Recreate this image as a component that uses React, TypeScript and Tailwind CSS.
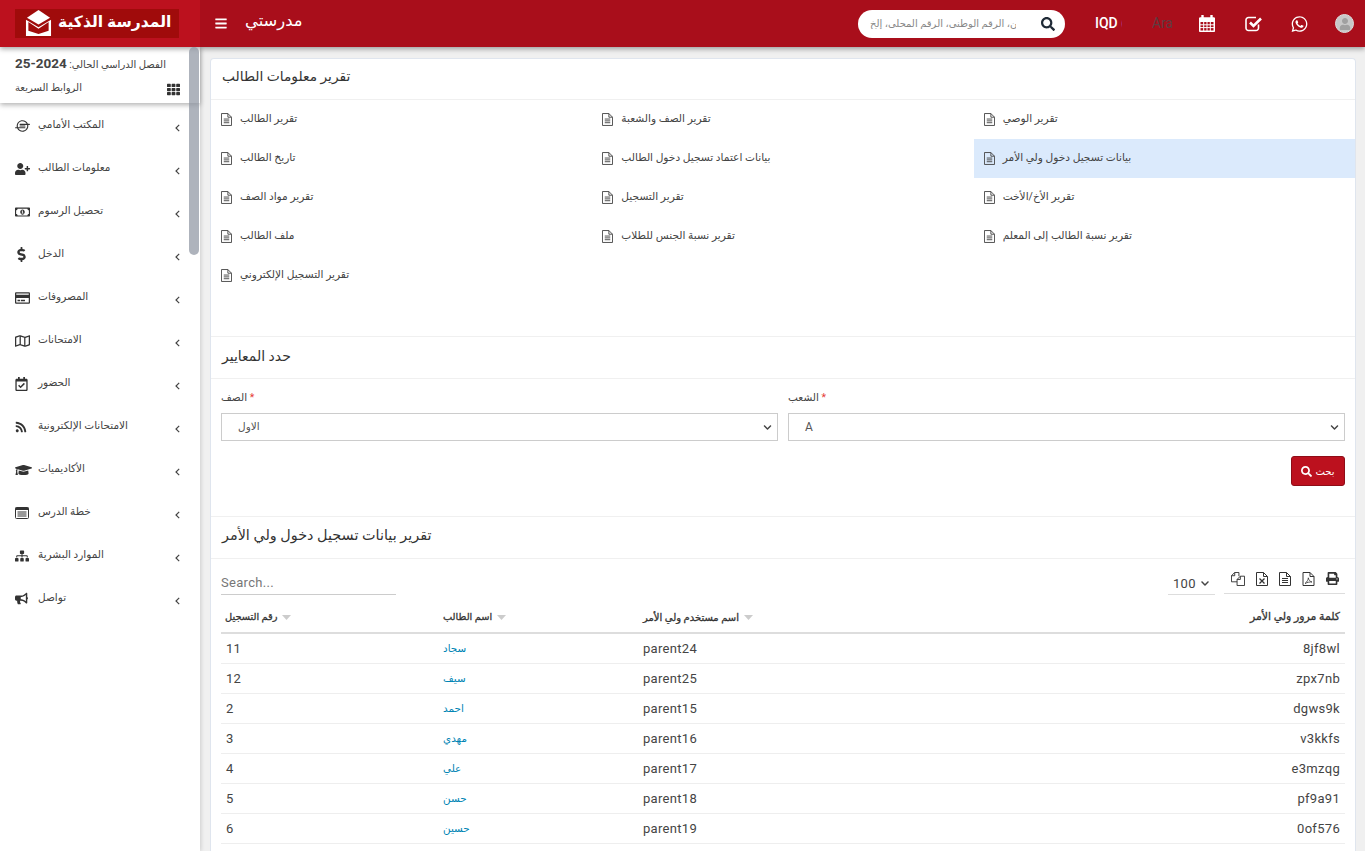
import {
  FaBars,
  FaBullhorn,
  FaChevronDown,
  FaDollarSign,
  FaGraduationCap,
  FaIoxhost,
  FaPrint,
  FaRegCalendarCheck,
  FaRegCreditCard,
  FaRegMap,
  FaRegMoneyBillAlt,
  FaRss,
  FaSearch,
  FaSitemap,
  FaTh,
  FaUser,
  FaUserPlus,
  FaWhatsapp,
} from "react-icons/fa";

const menu = [
  { label: "المكتب الأمامي", icon: <FaIoxhost className="h-[14px] w-[15px]" /> },
  { label: "معلومات الطالب", icon: <FaUserPlus className="h-[14px] w-[15px]" /> },
  { label: "تحصيل الرسوم", icon: <FaRegMoneyBillAlt className="h-[14px] w-[15px]" /> },
  { label: "الدخل", icon: <FaDollarSign className="h-[15px] w-[15px] -ml-[1px]" /> },
  { label: "المصروفات", icon: <FaRegCreditCard className="h-[14px] w-[15px]" /> },
  { label: "الامتحانات", icon: <FaRegMap className="h-[14px] w-[15px]" /> },
  { label: "الحضور", icon: <FaRegCalendarCheck className="h-[14px] w-[13px]" /> },
  { label: "الامتحانات الإلكترونية", icon: <FaRss className="h-[12px] w-[12px]" /> },
  { label: "الأكاديميات", icon: <FaGraduationCap className="h-[14px] w-[17px]" /> },
  { label: "خطة الدرس", icon: <ListAlt className="h-[12px] w-[14px]" /> },
  { label: "الموارد البشرية", icon: <FaSitemap className="h-[14px] w-[14px]" /> },
  { label: "تواصل", icon: <FaBullhorn className="h-[13px] w-[13px]" /> },
];

const reports = [
  "تقرير الطالب",
  "تقرير الصف والشعبة",
  "تقرير الوصي",
  "تاريخ الطالب",
  "بيانات اعتماد تسجيل دخول الطالب",
  "بيانات تسجيل دخول ولي الأمر",
  "تقرير مواد الصف",
  "تقرير التسجيل",
  "تقرير الأخ/الأخت",
  "ملف الطالب",
  "تقرير نسبة الجنس للطلاب",
  "تقرير نسبة الطالب إلى المعلم",
  "تقرير التسجيل الإلكتروني",
];

const rows = [
  ["11", "سجاد", "parent24", "8jf8wl"],
  ["12", "سيف", "parent25", "zpx7nb"],
  ["2", "احمد", "parent15", "dgws9k"],
  ["3", "مهدي", "parent16", "v3kkfs"],
  ["4", "علي", "parent17", "e3mzqg"],
  ["5", "حسن", "parent18", "pf9a91"],
  ["6", "حسين", "parent19", "0of576"],
];

function Logo() {
  return (
    <svg viewBox="0 0 28 28" className="h-[27px] w-[27px]" fill="none">
      <path d="M14 0 L26 8 L14 15 L2 8 Z" fill="#fff" />
      <path d="M1 10 L14 18 L27 10 V27 H1 Z" fill="#fff" />
      <path d="M3.5 12.5 L14 19.5 L24.5 12.5 V21.5 L14 25 L3.5 21.5 Z" fill="#a00b0b" />
    </svg>
  );
}

function ListAlt({ className }: { className?: string }) {
  return (
    <svg viewBox="0 0 14 12" className={className} fill="none">
      <rect x="0.5" y="0.5" width="13" height="11" rx="1" stroke="currentColor" />
      <rect x="0.5" y="0.5" width="13" height="2.5" fill="currentColor" />
      <path d="M2.5 5 H11.5 M2.5 7 H11.5 M2.5 9 H11.5" stroke="currentColor" />
    </svg>
  );
}

// file-text-o: the outlined page with a folded corner
function FileLines({ className }: { className?: string }) {
  return (
    <svg viewBox="0 0 12 14" className={className} fill="none" stroke="currentColor" strokeWidth="1">
      <path d="M0.5 0.5 H7.5 L11.5 4.5 V13.5 H0.5 Z" />
      <path d="M7.5 0.5 V4.5 H11.5" />
      <path d="M3 6.5 H9 M3 8.5 H9 M3 10.5 H9" />
    </svg>
  );
}

function FilesCopy({ className }: { className?: string }) {
  return (
    <svg viewBox="0 0 15 15" className={className} fill="none" stroke="currentColor" strokeWidth="1">
      <path d="M6.5 10.5 H0.5 V4 L4 0.5 H8.5 V4.5" />
      <path d="M4 0.5 V4 H0.5" />
      <path d="M6.5 14.5 V8 L10 4.5 H14.5 V14.5 Z" />
      <path d="M10 4.5 V8 H6.5" />
    </svg>
  );
}

function FileExcel({ className }: { className?: string }) {
  return (
    <svg viewBox="0 0 12 14" className={className} fill="none" stroke="currentColor" strokeWidth="1">
      <path d="M0.5 0.5 H7.5 L11.5 4.5 V13.5 H0.5 Z" />
      <path d="M7.5 0.5 V4.5 H11.5" />
      <path d="M3.5 6.5 L8.5 11.5 M8.5 6.5 L3.5 11.5" strokeWidth="1.3" />
    </svg>
  );
}

function FilePdf({ className }: { className?: string }) {
  return (
    <svg viewBox="0 0 12 14" className={className} fill="none" stroke="currentColor" strokeWidth="1">
      <path d="M0.5 0.5 H7.5 L11.5 4.5 V13.5 H0.5 Z" />
      <path d="M7.5 0.5 V4.5 H11.5" />
      <path d="M2.5 11.5 C4.5 10 6 7.5 5.8 5.8 C6.2 8 7.5 9.5 9.5 10 C7.5 9.8 5 10.2 2.5 11.5 Z" strokeWidth="0.8" />
    </svg>
  );
}

function CheckSquare({ className }: { className?: string }) {
  return (
    <svg viewBox="0 0 18 17" className={className} fill="none" stroke="currentColor">
      <path d="M13.5 9.5 V13 A2.5 2.5 0 0 1 11 15.5 H3.5 A2.5 2.5 0 0 1 1 13 V5 A2.5 2.5 0 0 1 3.5 2.5 H11" strokeWidth="1.6" />
      <path d="M5 7.5 L8.5 11 L16 3.5" strokeWidth="2.6" />
    </svg>
  );
}

function CalendarGrid({ className }: { className?: string }) {
  return (
    <svg viewBox="0 0 16 17" className={className} fill="none">
      <path d="M0.5 3 H15.5 V16.5 H0.5 Z M0.5 3 H15.5 V6 H0.5 Z" fill="#fff" stroke="#fff" />
      <path d="M3.5 0.5 V3.5 M12.5 0.5 V3.5" stroke="#fff" strokeWidth="2.4" strokeLinecap="round" />
      <path d="M1.5 7 H14.5 V15.5 H1.5 Z" fill="#a90e1b" />
      <path d="M1 9.8 H15 M1 12.6 H15 M4.7 7 V16 M8 7 V16 M11.3 7 V16" stroke="#fff" />
    </svg>
  );
}

function AngleLeft() {
  return (
    <svg viewBox="0 0 5 8" className="ml-auto h-[8px] w-[5px] text-[#444]" fill="none" stroke="currentColor" strokeWidth="1.2">
      <path d="M4.2 0.8 L1 4 L4.2 7.2" />
    </svg>
  );
}

function Header() {
  return (
    <header className="relative z-20 flex h-[47px] shrink-0 items-center bg-[#a90e1b] text-white shadow-[0_2px_5px_rgba(0,0,0,0.35)]">
      <div className="flex h-full w-[200px] shrink-0 items-center bg-[#bc111e] pl-[15px]">
        <div className="flex h-[29px] w-[164px] items-center gap-[6px] bg-[#a00b0b] pl-[10px]">
          <Logo />
          <span className="-translate-y-[1px] text-[15.6px] font-bold leading-none whitespace-nowrap">المدرسة الذكية</span>
        </div>
      </div>
      <FaBars className="ml-[15px] h-[13px] w-[12px]" />
      <span className="ml-[18px] -translate-y-[2px] text-[16.4px] leading-none">مدرستي</span>
      <div className="ml-auto flex items-center">
        <div className="flex h-[28px] w-[207px] items-center rounded-full bg-white pl-[12px]">
          <input
            placeholder="الاسم، الفصل، الهاتف، العنوان، الرقم الوطني، الرقم المحلي، إلخ"
            className="w-[146px] bg-transparent text-[10px] outline-none placeholder:text-[#888]"
          />
          <FaSearch className="ml-[25px] h-[14px] w-[14px] text-[#1f2a36]" />
        </div>
        <div className="ml-[30px] w-[27px] overflow-hidden whitespace-nowrap text-[14px] font-medium">IQD (د.ع)</div>
        <div className="ml-[30px] w-[20px] overflow-hidden whitespace-nowrap text-[14px] text-[#5e3c40]">Arabic</div>
        <CalendarGrid className="ml-[27px] h-[17px] w-[16px]" />
        <CheckSquare className="ml-[30px] h-[17px] w-[18px]" />
        <FaWhatsapp className="ml-[28px] h-[18px] w-[17px]" />
        <div className="ml-[27px] mr-[11px] flex h-[19px] w-[19px] items-center justify-center overflow-hidden rounded-full border border-[#ddd] bg-[#c8c8c8]">
          <FaUser className="h-[12px] w-[12px] text-[#a0a0a0]" />
        </div>
      </div>
    </header>
  );
}

function Sidebar() {
  return (
    <aside className="relative w-[200px] shrink-0 bg-white text-[#444] shadow-[1px_0_4px_rgba(0,0,0,0.15)]">
      <div className="relative z-10 h-[56px] bg-white px-[15px] pt-[8px] shadow-[0_2px_5px_rgba(0,0,0,0.3)]">
        <div dir="rtl" className="w-[152px] text-left text-[10px] leading-[16px] whitespace-nowrap">
          الفصل الدراسي الحالي: <b className="text-[13.5px] text-[#444]">2024-25</b>
        </div>
        <div className="mt-[8px] flex items-center justify-between pr-[5px]">
          <span className="-translate-y-[1px] text-[10px] leading-[16px]">الروابط السريعة</span>
          <FaTh className="h-[13px] w-[13px] text-[#333]" />
        </div>
      </div>
      <nav className="pt-[3px]">
        {menu.map((item) => (
          <div key={item.label} className="flex h-[43px] items-center pl-[15px] pr-[20px]">
            <span className="flex w-[23px] shrink-0 -translate-y-[2px] items-center text-[#333]">{item.icon}</span>
            <span className="-translate-y-[3px] whitespace-nowrap text-[10.5px]">{item.label}</span>
            <AngleLeft />
          </div>
        ))}
      </nav>
      <div className="absolute right-[1px] top-0 z-20 h-[208px] w-[10px] rounded-[5px] bg-[#8b93a0]/70" />
    </aside>
  );
}

function SectionTitle({ children, className }: { children: React.ReactNode; className: string }) {
  return (
    <div className={`flex items-center border-b border-[#f0f0f0] px-[11px] text-[#333] ${className}`}>
      {children}
    </div>
  );
}

function SelectBox({ label, value, valueClass }: { label: string; value: string; valueClass: string }) {
  return (
    <div>
      <div className="h-[26px] pt-[3px] text-[10.5px] leading-[16px] text-[#444]">
        {label} <span className="text-[#e53935]">*</span>
      </div>
      <div className="flex h-[28px] items-center justify-between border border-[#ccc] pl-[16px] pr-[5px] text-[#555]">
        <span className={valueClass}>{value}</span>
        <FaChevronDown className="h-[9px] w-[9px] text-[#444]" />
      </div>
    </div>
  );
}

function SortHead({ label }: { label: string }) {
  return (
    <span className="inline-flex items-center gap-[5px]">
      {label}
      <svg viewBox="0 0 9 5" className="h-[5px] w-[9px] text-[#ccc]" fill="currentColor">
        <path d="M0 0 H9 L4.5 5 Z" />
      </svg>
    </span>
  );
}

function Content() {
  return (
    <main className="ml-[10px] mr-[9px] mt-[11px] min-w-0 flex-1 rounded-t-[4px] border-x border-t border-[#dfe5ee] bg-white">
      <SectionTitle className="h-[41px] pb-[5px] text-[13.8px]">تقرير معلومات الطالب</SectionTitle>
      <div className="grid h-[237px] grid-cols-3 content-start border-b border-[#f0f0f0]">
        {reports.map((name) => {
          const active = name === "بيانات تسجيل دخول ولي الأمر";
          return (
            <div
              key={name}
              className={`flex h-[39px] items-center gap-[8px] pl-[10px] text-[10.6px] text-[#444] ${active ? "bg-[#dbeafc]" : ""}`}
            >
              <FileLines className="h-[13px] w-[11px] text-[#444]" />
              <span className="-translate-y-[1px]">{name}</span>
            </div>
          );
        })}
      </div>

      <SectionTitle className="h-[42px] pb-[2px] text-[14px]">حدد المعايير</SectionTitle>
      <div className="h-[138px] border-b border-[#f0f0f0] px-[10px]">
        <div className="grid grid-cols-2 gap-[10px] pt-[8px]">
          <SelectBox label="الصف" value="الاول" valueClass="text-[10.5px]" />
          <SelectBox label="الشعب" value="A" valueClass="text-[12px]" />
        </div>
        <div className="mt-[15px] flex justify-end">
          <button className="flex h-[30px] w-[54px] items-center justify-center gap-[3px] rounded-[3px] border border-[#8f0d17] bg-[#bc111e] text-[10px] text-white">
            <FaSearch className="h-[11px] w-[11px]" />
            بحث
          </button>
        </div>
      </div>

      <SectionTitle className="h-[42px] pb-[4px] text-[14.4px]">تقرير بيانات تسجيل دخول ولي الأمر</SectionTitle>
      <div className="px-[10px]">
        <div className="flex h-[36px] items-end justify-between tracking-[0.3px]">
          <div className="w-[175px] border-b border-[#ccc] pb-[3px] text-[13px] leading-[16px] text-[#777]">Search...</div>
          <div className="flex items-end gap-[9px]">
            <div className="flex h-[22px] w-[47px] items-center gap-[4px] border-b border-[#ddd] pl-[5px] text-[13px] text-[#444]">
              100 <FaChevronDown className="h-[9px] w-[10px]" />
            </div>
            <div className="mb-[1px] flex h-[22px] w-[121px] items-start gap-[11px] border-b border-[#ddd] pl-[7px] text-[#333]">
              <FilesCopy className="h-[14px] w-[14px]" />
              <FileExcel className="h-[14px] w-[12px]" />
              <FileLines className="h-[14px] w-[12px]" />
              <FilePdf className="h-[14px] w-[13px]" />
              <FaPrint className="h-[13px] w-[13px]" />
            </div>
          </div>
        </div>
        <table className="mt-[8px] w-full table-fixed text-[13px] tracking-[0.3px] text-[#444]">
          <colgroup>
            <col className="w-[218px]" />
            <col className="w-[200px]" />
            <col />
            <col />
          </colgroup>
          <thead>
            <tr className="h-[30px] border-b-2 border-[#ddd] tracking-normal text-[#333] [-webkit-text-stroke:0.3px_#333]">
              <th className="pl-[4px] text-left text-[9.8px] font-normal"><SortHead label="رقم التسجيل" /></th>
              <th className="pl-[4px] text-left text-[9.8px] font-normal"><SortHead label="اسم الطالب" /></th>
              <th className="pl-[4px] text-left text-[10px] font-normal"><SortHead label="اسم مستخدم ولي الأمر" /></th>
              <th className="pr-[5px] text-right text-[10.9px] font-normal">كلمة مرور ولي الأمر</th>
            </tr>
          </thead>
          <tbody>
            {rows.map((row) => (
              <tr key={row[0]} className="h-[30px] border-b border-[#eee]">
                <td className="pl-[5px] pt-[1px]">{row[0]}</td>
                <td className="pl-[4px] pt-[1px] text-[10.4px] tracking-normal text-[#0084b4]">{row[1]}</td>
                <td className="pl-[4px] pt-[1px]">{row[2]}</td>
                <td className="pr-[5px] pt-[1px] text-right">{row[3]}</td>
              </tr>
            ))}
          </tbody>
        </table>
      </div>
    </main>
  );
}

export default function App() {
  return (
    <div className="flex h-screen flex-col overflow-hidden bg-[#f0f0f0] font-['Roboto','DejaVu_Sans',sans-serif]">
      <Header />
      <div className="flex min-h-0 flex-1">
        <Sidebar />
        <Content />
      </div>
    </div>
  );
}
